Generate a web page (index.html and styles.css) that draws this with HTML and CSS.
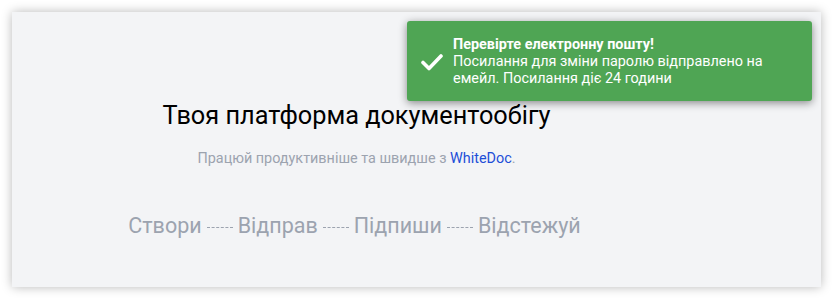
FILE: index.html
```html
<!DOCTYPE html>
<html lang="uk">
<head>
<meta charset="utf-8">
<link rel="stylesheet" href="styles.css">
</head>
<body>
<div class="card">
  <div class="hero">
    <h1 class="title">Твоя платформа документообігу</h1>
    <p class="subtitle">Працюй продуктивніше та швидше з <span class="brand">WhiteDoc</span>.</p>
    <div class="steps">
      <span class="step">Створи</span><span class="dash"></span>
      <span class="step">Відправ</span><span class="dash"></span>
      <span class="step">Підпиши</span><span class="dash"></span>
      <span class="step">Відстежуй</span>
    </div>
  </div>
</div>
<div class="toast">
  <svg class="toast-icon" width="22" height="18" viewBox="0 0 22 18"><path d="M2 9.5 L8 15.5 L20 3" fill="none" stroke="#fff" stroke-width="3.6" stroke-linecap="round" stroke-linejoin="round"/></svg>
  <div class="toast-text">
    <div class="toast-title">Перевірте електронну пошту!</div>
    <div class="toast-body">Посилання для зміни паролю відправлено на емейл. Посилання діє 24 години</div>
  </div>
</div>
</body>
</html>
```
FILE: styles.css
```css
* { box-sizing: border-box; }
html, body { margin: 0; padding: 0; background: #ffffff; }
body {
  width: 833px;
  height: 299px;
  padding: 12px 12px 12px 12px;
  font-family: Roboto, "Noto Sans", sans-serif;
  overflow: hidden;
}
.card {
  width: 809px;
  height: 275px;
  background: #f3f4f6;
  box-shadow: 0 0 10px rgba(0,0,0,0.28);
  padding: 87px 120px 0 0;
}
.hero {
  display: flex;
  flex-direction: column;
  align-items: center;
}
.title {
  margin: 0;
  font-size: 25.3px;
  font-weight: 400;
  color: #000;
  line-height: 34px;
}
.subtitle {
  margin: 16px 0 0 0;
  font-size: 14.4px;
  line-height: 20px;
  color: #9ca3af;
}
.brand { color: #1d4ed8; }
.steps {
  margin: 42px 4px 0 0;
  display: flex;
  align-items: center;
  gap: 5px;
  font-size: 21.5px;
  line-height: 30px;
  color: #9ca3af;
}
.dash {
  width: 26px;
  border-top: 1px dashed #9ca3af;
  margin-top: 2px;
}
.toast {
  position: absolute;
  left: 407px;
  top: 21px;
  width: 405px;
  height: 80px;
  background: #4fa554;
  border-radius: 3px;
  box-shadow: 0 2px 8px rgba(0,0,0,0.45);
  display: flex;
  align-items: center;
  padding: 0 20px 0 14px;
  gap: 10px;
  color: #fff;
}
.toast-icon { flex: none; margin-top: 2px; }
.toast-text {
  font-size: 14.4px;
  line-height: 17px;
}
.toast-title { font-weight: 700; }
```
